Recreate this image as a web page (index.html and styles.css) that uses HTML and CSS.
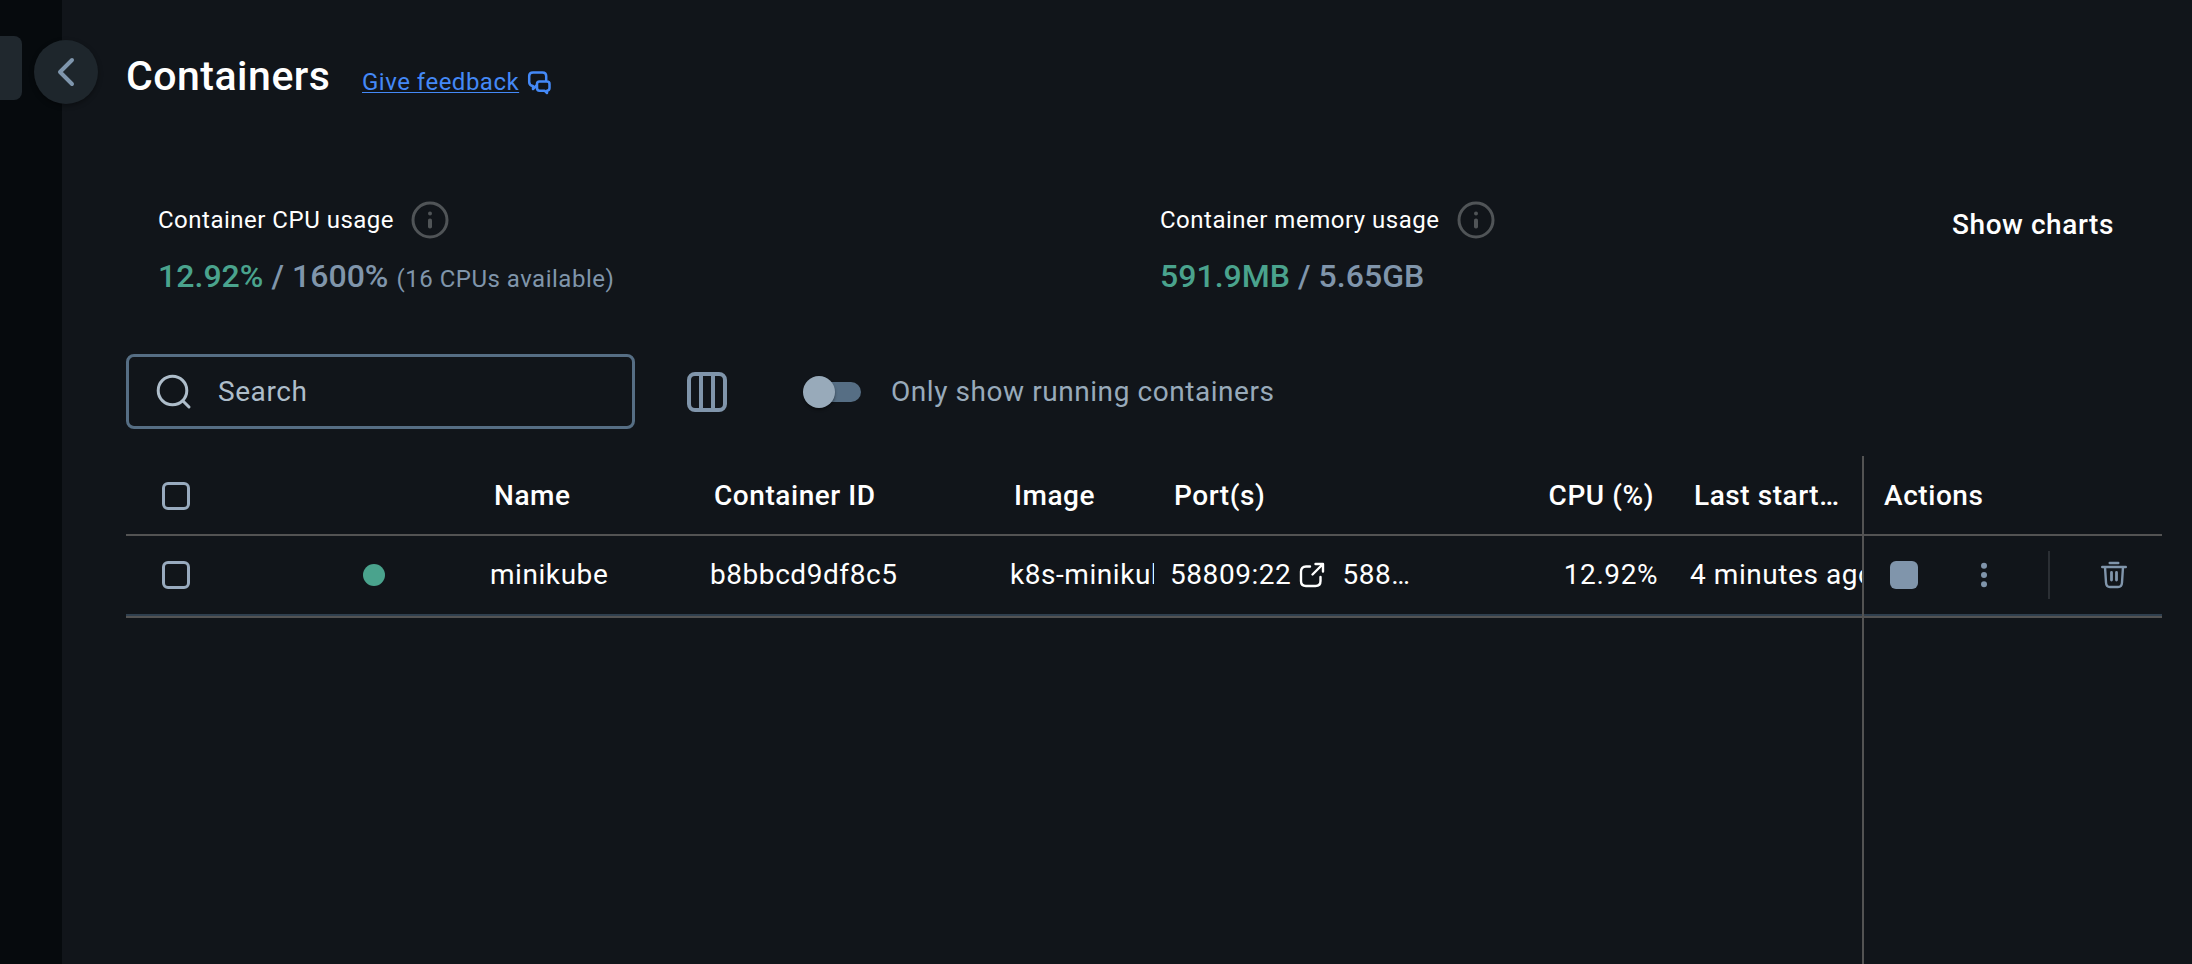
FILE: index.html
```html
<!DOCTYPE html>
<html lang="en">
<head>
<meta charset="utf-8">
<title>Containers</title>
<link rel="stylesheet" href="styles.css">
</head>
<body>
<div class="app">
  <aside class="sidebar">
    <div class="nav-item"></div>
    <button class="collapse" aria-label="Collapse sidebar">
      <svg width="64" height="64" viewBox="0 0 64 64"><path d="M38 20 26 32 38 44" class="chevron"/></svg>
    </button>
  </aside>
  <main class="main">
    <header class="header">
      <h1 class="title">Containers</h1>
      <a class="feedback" href="#"><span class="feedback-text">Give feedback</span>
        <svg class="feedback-icon" width="24" height="26" viewBox="0 0 24 26"><path d="M9.500 15.500 6 19V16Q2.200 15.500 2.200 12V6Q2.200 2.500 6 2.500H15.500Q19.200 2.500 19.200 6V10.500M12.500 11.500H20Q22.500 11.500 22.500 14V18Q22.500 20.500 20 20.700V23L17.500 20.700H12.500Q10 20.700 10 18V14Q10 11.500 12.500 11.500Z"/></svg>
      </a>
    </header>
    <section class="usage">
      <div class="stat cpu">
        <div class="stat-label"><span>Container CPU usage</span><svg class="info" width="38" height="38" viewBox="0 0 38 38"><circle cx="19" cy="19" r="17" class="ring"/><circle cx="19" cy="12.500" r="2"/><rect x="17" y="17.500" width="4" height="10" rx="1.800"/></svg></div>
        <div class="stat-value"><span class="used">12.92%</span> / 1600% <span class="note">(16 CPUs available)</span></div>
      </div>
      <div class="stat memory">
        <div class="stat-label"><span>Container memory usage</span><svg class="info" width="38" height="38" viewBox="0 0 38 38"><circle cx="19" cy="19" r="17" class="ring"/><circle cx="19" cy="12.500" r="2"/><rect x="17" y="17.500" width="4" height="10" rx="1.800"/></svg></div>
        <div class="stat-value"><span class="used">591.9MB</span> / 5.65GB</div>
      </div>
      <button class="charts">Show charts</button>
    </section>
    <section class="toolbar">
      <div class="search">
        <svg width="36" height="36" viewBox="0 0 36 36"><circle cx="16.500" cy="16.500" r="14.300"/><path d="M27 27 33 33"/></svg>
        <span>Search</span>
      </div>
      <svg class="columns" width="40" height="40" viewBox="0 0 40 40"><rect x="2" y="2" width="36" height="36" rx="6"/><path d="M14 2V38M26 2V38"/></svg>
      <div class="toggle"><span class="track"></span><span class="thumb"></span></div>
      <span class="toggle-label">Only show running containers</span>
    </section>
    <section class="table">
      <div class="row head">
        <div class="check"><span class="box"></span></div>
        <div class="status"></div>
        <div class="cell">Name</div>
        <div class="cell">Container ID</div>
        <div class="cell">Image</div>
        <div class="cell">Port(s)</div>
        <div class="cell num">CPU (%)</div>
        <div class="cell">Last start…</div>
        <div class="actions">Actions</div>
      </div>
      <div class="row body">
        <div class="check"><span class="box"></span></div>
        <div class="status"><span class="dot"></span></div>
        <div class="cell">minikube</div>
        <div class="cell">b8bbcd9df8c5</div>
        <div class="cell image">k8s-minikube</div>
        <div class="cell ports"><span>58809:22</span><svg class="external" width="26" height="26" viewBox="0 0 26 26"><path d="M11 4.500H7Q2 4.500 2 9.500V19Q2 24 7 24H16.500Q21.500 24 21.500 19V15M13.500 12.500 23 3M16.500 2H24V9.500"/></svg><span>588…</span></div>
        <div class="cell num">12.92%</div>
        <div class="cell last">4 minutes ago</div>
        <div class="actions">
          <span class="stop"></span>
          <svg class="more" width="8" height="28" viewBox="0 0 8 28"><circle cx="4" cy="4.800" r="3"/><circle cx="4" cy="14" r="3"/><circle cx="4" cy="23.300" r="3"/></svg>
          <span class="divider"></span>
          <svg class="trash" width="28" height="28" viewBox="0 0 28 28"><path d="M9.700 2H18.300M2.200 6H25.800M5 6 6 21.500Q6.200 26 10 26H18Q21.800 26 22 21.500L23 6"/><path d="M11.500 11.500V19M16.500 11.500V19" class="bars"/></svg>
        </div>
      </div>
      <div class="row rest"><div class="actions"></div></div>
    </section>
  </main>
</div>
</body>
</html>
```
FILE: styles.css
```css
* { box-sizing: border-box; }
body { margin: 0; background: #11151a; color: #fff; font-family: Roboto, sans-serif; font-size: 28px; line-height: 40px; letter-spacing: 0.56px; }
button { background: none; border: 0; padding: 0; color: inherit; font: inherit; letter-spacing: inherit; }
svg { display: block; flex: none; fill: none; stroke-linecap: round; stroke-linejoin: round; }
.app { display: flex; height: 964px; overflow: hidden; }
.sidebar { position: relative; flex: none; width: 62px; background: #060a0d; padding-top: 36px; }
.nav-item { width: 22px; height: 64px; background: #20282e; border-radius: 0 8px 8px 0; }
.collapse { position: absolute; left: 34px; top: 40px; width: 64px; height: 64px; border-radius: 50%; background: #1e262c; box-shadow: 0 2px 5px rgba(0,0,0,.35); }
.chevron { stroke: #7f96ad; stroke-width: 4; }
.main { display: flex; flex-direction: column; flex: 1; min-width: 0; padding: 50px 30px 0 64px; }
.header { display: flex; height: 52px; flex: none; }
.title { margin: 0; font-size: 41px; font-weight: 500; line-height: 52px; letter-spacing: 0.5px; width: 236px; }
.feedback { display: flex; color: #4489f7; font-size: 24px; line-height: 32px; padding-top: 16px; text-decoration: none; }
.feedback-text { height: 32px; text-decoration: underline; text-decoration-thickness: 1px; text-underline-offset: 2px; letter-spacing: 0.5px; }
.feedback-icon { stroke: #4489f7; stroke-width: 2.5; margin: 4px 0 0 8px; }
.usage { display: flex; flex: none; height: 152px; margin-top: 98px; padding-left: 32px; }
.stat { width: 1002px; flex: none; }
.memory { width: 780px; }
.stat-label { display: flex; align-items: center; height: 40px; gap: 17px; font-size: 24px; letter-spacing: 0.5px; }
.memory .stat-label { gap: 18px; }
.info { fill: #505457; }
.ring { fill: none; stroke: #505457; stroke-width: 3; }
.stat-value { margin-top: 16px; font-size: 32px; font-weight: 500; line-height: 40px; color: #8095ab; letter-spacing: 0.04px; white-space: nowrap; }
.used { color: #4aa38d; }
.note { font-size: 24px; font-weight: 400; letter-spacing: 0.5px; }
.charts { align-self: flex-start; margin-top: 5px; font-weight: 500; margin-left: 12px; white-space: nowrap; }
.toolbar { display: flex; flex: none; height: 80px; align-items: center; }
.search { display: flex; align-items: center; width: 509px; height: 75px; margin-bottom: 1px; border: 3px solid #566e84; border-radius: 8px; padding-left: 27px; color: #aebdca; gap: 26px; }
.search svg { stroke: #aebdca; stroke-width: 3; }
.columns { stroke: #8095ab; stroke-width: 4; margin-left: 52px; }
.toggle { position: relative; display: flex; align-items: center; width: 58px; height: 32px; margin-left: 76px; }
.track { width: 50px; height: 20px; margin-left: 8px; border-radius: 10px; background: #566e84; }
.thumb { position: absolute; left: 0; top: 0; width: 32px; height: 32px; border-radius: 50%; background: #98aaba; box-shadow: 0 2px 3px rgba(0,0,0,.4); }
.toggle-label { margin-left: 30px; color: #98aaba; }
.table { display: flex; flex-direction: column; flex: 1; margin-top: 24px; }
.row { display: grid; grid-template-columns: 98px 266px 220px 300px 160px 320px 200px 172px 300px; align-items: center; flex: none; white-space: nowrap; }
.head { height: 80px; padding-top: 2px; font-weight: 500; border-bottom: 2px solid #535353; }
.body { height: 82px; padding-bottom: 2px; border-bottom: 2px solid #535353; box-shadow: inset 0 -2px #2f3f4e; }
.check { padding-left: 36px; }
.box { display: block; width: 28px; height: 28px; border: 3px solid #98aabe; border-radius: 6px; }
.status { padding-left: 139px; }
.dot { display: block; width: 22px; height: 22px; border-radius: 50%; background: #4aa38d; }
.cell { overflow: hidden; }
.head .cell { padding-left: 4px; }
.num { padding-right: 32px; text-align: right; }
.head .num { padding-right: 36px; }
.image { margin-right: 16px; }
.ports { display: flex; align-items: center; }
.external { stroke: #fff; stroke-width: 2.4; margin: 0 17px 0 8px; }
.actions { display: flex; align-items: center; align-self: stretch; border-left: 2px solid #535353; padding-left: 20px; }
.head .actions { margin: -2px 0; }
.body .actions { padding: 0 0 4px 26px; margin-bottom: -4px; }
.stop { width: 28px; height: 28px; border-radius: 6px; background: #8095ab; }
.more { margin-left: 62px; fill: #8095ab; }
.divider { width: 2px; height: 48px; margin-left: 60px; background: #2b2f34; }
.trash { margin-left: 50px; stroke: #8095ab; stroke-width: 2.4; }
.bars { stroke-width: 2.8; }
.rest { flex: 1; }
.rest .actions { grid-column: 9; }
```
